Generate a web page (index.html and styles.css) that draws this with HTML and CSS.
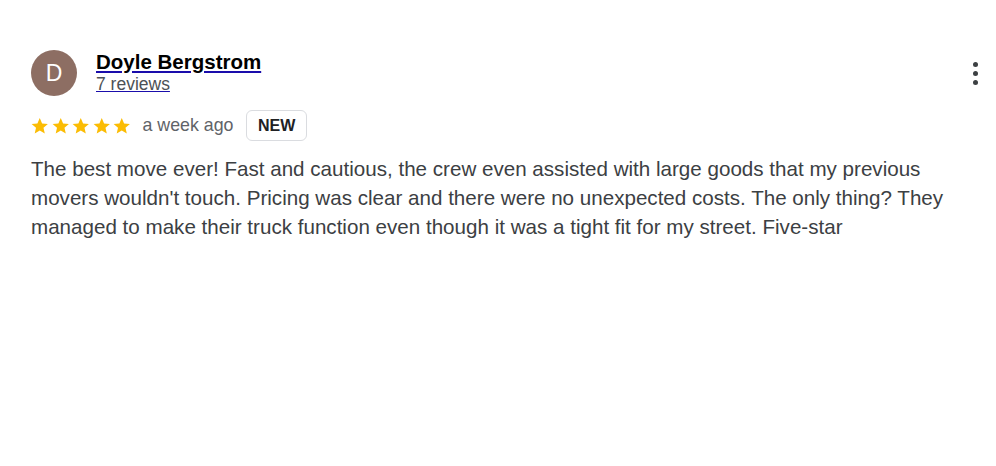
FILE: index.html
```html
<!DOCTYPE html>
<html>
<head>
<meta charset="utf-8">
<link rel="stylesheet" href="styles.css">
</head>
<body>
<div class="review">
  <div class="header">
    <div class="avatar">D</div>
    <div class="author">
      <a class="name" href="#">Doyle Bergstrom</a>
      <a class="count" href="#">7 reviews</a>
    </div>
    <button class="more" aria-label="More options">
      <span></span><span></span><span></span>
    </button>
  </div>
  <div class="meta">
    <div class="stars">
      <svg viewBox="0 0 24 24"><path d="M12 2.5l2.9 6.6 7.1.6-5.4 4.7 1.6 7-6.2-3.7-6.2 3.7 1.6-7L2 9.7l7.1-.6z"/></svg>
      <svg viewBox="0 0 24 24"><path d="M12 2.5l2.9 6.6 7.1.6-5.4 4.7 1.6 7-6.2-3.7-6.2 3.7 1.6-7L2 9.7l7.1-.6z"/></svg>
      <svg viewBox="0 0 24 24"><path d="M12 2.5l2.9 6.6 7.1.6-5.4 4.7 1.6 7-6.2-3.7-6.2 3.7 1.6-7L2 9.7l7.1-.6z"/></svg>
      <svg viewBox="0 0 24 24"><path d="M12 2.5l2.9 6.6 7.1.6-5.4 4.7 1.6 7-6.2-3.7-6.2 3.7 1.6-7L2 9.7l7.1-.6z"/></svg>
      <svg viewBox="0 0 24 24"><path d="M12 2.5l2.9 6.6 7.1.6-5.4 4.7 1.6 7-6.2-3.7-6.2 3.7 1.6-7L2 9.7l7.1-.6z"/></svg>
    </div>
    <span class="time">a week ago</span>
    <span class="badge">NEW</span>
  </div>
  <p class="text">The best move ever! Fast and cautious, the crew even assisted with large goods that my previous movers wouldn't touch. Pricing was clear and there were no unexpected costs. The only thing? They managed to make their truck function even though it was a tight fit for my street. Five-star</p>
</div>
</body>
</html>
```

FILE: styles.css
```css
html, body {
  margin: 0;
  padding: 0;
  background: #ffffff;
}

body {
  font-family: "Liberation Sans", Arial, sans-serif;
  color: #202124;
}

.review {
  padding: 50px 16px 0 31px;
}

.header {
  display: flex;
  align-items: flex-start;
}

.avatar {
  width: 46px;
  height: 46px;
  border-radius: 50%;
  background: #8d6e63;
  color: #ffffff;
  font-size: 23px;
  line-height: 46px;
  text-align: center;
  flex-shrink: 0;
}

.author {
  display: flex;
  flex-direction: column;
  margin-left: 19px;
  flex: 1;
}

.name {
  font-size: 20.5px;
  font-weight: bold;
  color: #000000;
  text-decoration-color: #1a0dab;
  line-height: 23px;
  align-self: flex-start;
}

.count {
  font-size: 17.5px;
  color: #4d5156;
  text-decoration-color: #1a0dab;
  line-height: 20px;
  margin-top: 1px;
  align-self: flex-start;
}

.more {
  border: 0;
  background: transparent;
  padding: 0;
  margin-top: 12px;
  width: 10px;
  display: flex;
  flex-direction: column;
  align-items: center;
  gap: 4px;
}

.more span {
  width: 5px;
  height: 5px;
  border-radius: 50%;
  background: #3c4043;
}

.meta {
  display: flex;
  align-items: center;
  margin-top: 14px;
}

.stars {
  display: flex;
  gap: 1px;
  margin-left: -1px;
}

.stars svg {
  width: 19.5px;
  height: 19.5px;
  fill: #fbbc04;
}

.time {
  font-size: 17.8px;
  color: #5f6368;
  margin-left: 11px;
}

.badge {
  margin-left: 13px;
  border: 1px solid #dadce0;
  border-radius: 6px;
  height: 29px;
  padding: 0 10.5px;
  display: flex;
  align-items: center;
  font-size: 16px;
  font-weight: bold;
  color: #202124;
}

.text {
  margin: 13px 0 0 0;
  font-size: 20.6px;
  line-height: 29px;
  color: #3c4043;
  max-width: 935px;
}
```
